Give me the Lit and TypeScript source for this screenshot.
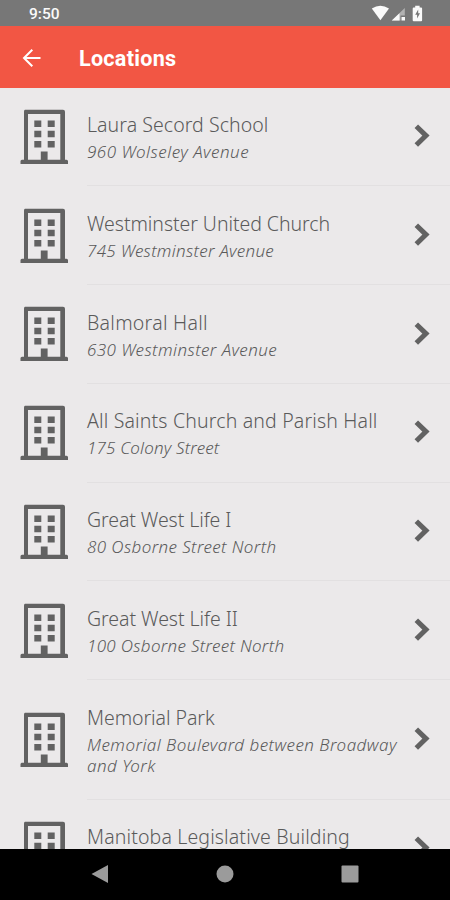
import { LitElement, html, css, nothing } from "lit";
import { customElement, property } from "lit/decorators.js";

interface Place {
  name: string;
  address?: string;
  nameTracking: number;
  addressTracking?: number;
}

const PLACES: Place[] = [
  { name: "Laura Secord School", address: "960 Wolseley Avenue", nameTracking: 0.06, addressTracking: 0.5 },
  { name: "Westminster United Church", address: "745 Westminster Avenue", nameTracking: -0.06, addressTracking: 0.28 },
  { name: "Balmoral Hall", address: "630 Westminster Avenue", nameTracking: 0.27, addressTracking: 0.42 },
  { name: "All Saints Church and Parish Hall", address: "175 Colony Street", nameTracking: 0.16, addressTracking: 0.16 },
  { name: "Great West Life I", address: "80 Osborne Street North", nameTracking: -0.08, addressTracking: 0.38 },
  { name: "Great West Life II", address: "100 Osborne Street North", nameTracking: -0.05, addressTracking: 0.3 },
  { name: "Memorial Park", address: "Memorial Boulevard between Broadway and York", nameTracking: -0.06, addressTracking: 0.46 },
  { name: "Manitoba Legislative Building", nameTracking: 0.14 },
];

@customElement("status-bar")
export class StatusBar extends LitElement {
  static styles = css`
    :host {
      display: flex;
      align-items: center;
      justify-content: space-between;
      height: 26px;
      flex: none;
      padding: 0 26px 0 29px;
      background: #777777;
      color: #fafafa;
      font: 500 15.5px/26px Roboto, sans-serif;
    }
    .time { padding-top: 2px; }
    svg { display: block; }
  `;
  render() {
    return html`
      <span class="time">9:50</span>
      <svg width="54" height="26" viewBox="370 0 54 26" fill="#fafafa">
        <path d="M371.8 8.6Q380.3 3 389 8.6L380.4 20.2Z" />
        <path d="M404.800 8V15.500H400.500V20.600H391.800Z" opacity=".45" />
        <path d="M399.500 13.200V20.600H391.800ZM401.500 16.900h3.500v3.700h-3.500z" />
        <path d="M415.200 5.800h4.400v1.800h1.500q1 0 1 1v11.600q0 1-1 1h-7.400q-1 0-1-1V8.600q0-1 1-1h1.500z" />
        <path d="M418.200 9.500l-3 5.300h1.900v3.700l2.900-5.300h-1.800z" fill="#777777" />
      </svg>
    `;
  }
}

@customElement("title-bar")
export class TitleBar extends LitElement {
  static styles = css`
    :host {
      display: flex;
      align-items: center;
      height: 62px;
      flex: none;
      box-sizing: border-box;
      padding-left: 22px;
      padding-top: 4px;
      background: #f25644;
      color: #fff;
    }
    svg { display: block; margin-top: -3px; }
    .heading {
      margin: 0 0 0 38px;
      font: 700 21.6px/28px Roboto, sans-serif;
      letter-spacing: 0.25px;
    }
  `;
  render() {
    return html`
      <svg width="19" height="20" viewBox="0 0 19 20" fill="none" stroke="#fff" stroke-width="2">
        <path d="M18.500 10H2.500M10.300 1.700L2 10l8.300 8.300" />
      </svg>
      <h1 class="heading">Locations</h1>
    `;
  }
}

@customElement("place-row")
export class PlaceRow extends LitElement {
  @property({ attribute: false }) place!: Place;

  static styles = css`
    :host {
      display: flex;
      align-items: stretch;
      flex: none;
      padding-left: 20px;
      color: #5a5a5a;
      font-family: "Noto Sans", sans-serif;
    }
    .building { align-self: center; flex: none; margin-right: 19px; }
    .body {
      flex: 1;
      display: flex;
      align-items: center;
      justify-content: space-between;
      padding: 22.500px 20px 23.300px 0;
      border-bottom: 1px solid #e2e0e1;
    }
    .text { width: 318px; }
    .name { font-size: 19.500px; line-height: 30px; font-weight: 300; white-space: nowrap; }
    .address { min-height: 21px; margin-top: 1px; font-size: 17px; line-height: 21px; font-weight: 300; font-style: italic; }
    .chevron { flex: none; }
  `;
  render() {
    const { name, address, nameTracking, addressTracking = 0 } = this.place;
    return html`
      <svg class="building" width="48" height="56" viewBox="0 0 48 56" fill="#626262">
        <path fill-rule="evenodd" d="M5 .8h38q2 0 2 2V50.800h1.500q1.500 0 1.500 1.500v2.700H.500v-2.700q0-1.500 1.500-1.500h2V2.800q0-2 1-2zM8 5v45.800h12.800v-8.300h6.800v8.300H40.300V5z" />
        <path d="M14.300 11.500h7v6.500h-7zM27.700 11.500h7v6.500h-7zM14.300 21.700h7v6.500h-7zM27.700 21.700h7v6.500h-7zM14.300 32h7v6.500h-7zM27.700 32h7v6.500h-7z" />
      </svg>
      <div class="body">
        <div class="text">
          <div class="name" style="letter-spacing:${nameTracking}px">${name}</div>
          <div class="address" style="letter-spacing:${addressTracking}px">${address ?? nothing}</div>
        </div>
        <svg class="chevron" width="16" height="24" viewBox="0 0 16 24" fill="none" stroke="#626262" stroke-width="5">
          <path d="M2.300 2.200L12 11.600L2.300 21" />
        </svg>
      </div>
    `;
  }
}

@customElement("nav-bar")
export class NavBar extends LitElement {
  static styles = css`
    :host {
      display: flex;
      align-items: center;
      justify-content: space-between;
      flex: none;
      height: 51.500px;
      box-sizing: border-box;
      padding: 0 91px 1px;
      background: #000;
    }
    svg { display: block; }
  `;
  render() {
    return html`
      <svg width="18" height="20" fill="#9b9b9b"><path d="M17 1v18L.500 10z" /></svg>
      <svg width="18" height="18" fill="#9b9b9b"><circle cx="9" cy="9" r="8.500" /></svg>
      <svg width="18" height="18" fill="#9b9b9b"><rect x=".5" y=".5" width="17" height="17" rx="1" /></svg>
    `;
  }
}

@customElement("app-root")
export class AppRoot extends LitElement {
  static styles = css`
    :host {
      display: flex;
      flex-direction: column;
      width: 450px;
      height: 900px;
      overflow: hidden;
      background: #ebe9ea;
    }
    .list {
      flex: 1;
      min-height: 0;
      margin-top: -0.600px;
      overflow: hidden;
      display: flex;
      flex-direction: column;
    }
  `;
  render() {
    return html`
      <status-bar></status-bar>
      <title-bar></title-bar>
      <div class="list">
        ${PLACES.map((place) => html`<place-row .place=${place}></place-row>`)}
      </div>
      <nav-bar></nav-bar>
    `;
  }
}
